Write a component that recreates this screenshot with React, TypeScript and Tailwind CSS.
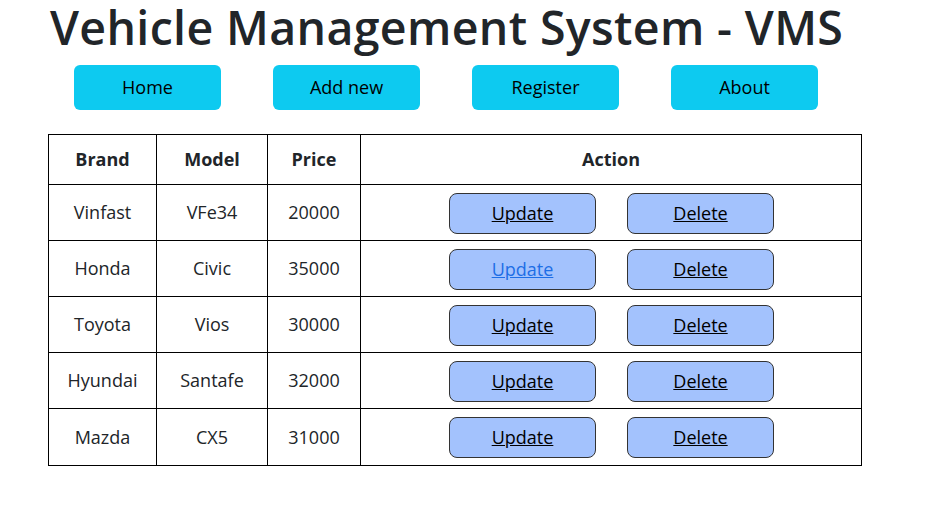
const vehicles = [
  { brand: "Vinfast", model: "VFe34", price: 20000 },
  { brand: "Honda", model: "Civic", price: 35000 },
  { brand: "Toyota", model: "Vios", price: 30000 },
  { brand: "Hyundai", model: "Santafe", price: 32000 },
  { brand: "Mazda", model: "CX5", price: 31000 },
];

const navItems = ["Home", "Add new", "Register", "About"];

export default function App() {
  return (
    <div className="min-h-screen bg-white text-[#212529] font-['Open_Sans','Noto_Sans',sans-serif]">
      <div className="pl-[48px] w-[862px]">
        <h1 className="ml-[2px] text-[46.5px] leading-[54px] font-semibold tracking-[0.35px] whitespace-nowrap">
          Vehicle Management System - VMS
        </h1>

        <nav className="flex gap-[52px] ml-[26px] mt-[11px]">
          {navItems.map((item) => (
            <button
              key={item}
              className="w-[147px] h-[45px] rounded-md bg-[#0dcaf0] text-[18px] text-black"
            >
              {item}
            </button>
          ))}
        </nav>

        <table className="mt-[24px] w-[814px] border-collapse text-[18px] text-center">
          <thead>
            <tr className="h-[50px]">
              <th className="border border-black w-[108px] font-bold">Brand</th>
              <th className="border border-black w-[111px] font-bold">Model</th>
              <th className="border border-black w-[93px] font-bold">Price</th>
              <th className="border border-black font-bold">Action</th>
            </tr>
          </thead>
          <tbody>
            {vehicles.map((v, i) => (
              <tr key={v.brand} className={i === 4 ? "h-[57px]" : "h-[56px]"}>
                <td className="border border-black">{v.brand}</td>
                <td className="border border-black">{v.model}</td>
                <td className="border border-black">{v.price}</td>
                <td className="border border-black">
                  <div className="flex justify-center gap-[31px] pl-[1px] pt-[1px]">
                    <button
                      className={`w-[147px] h-[41px] rounded-lg border border-[#333] bg-[#a3c2fd] underline ${
                        i === 1 ? "text-[#1d6ee6]" : "text-black"
                      }`}
                    >
                      Update
                    </button>
                    <button className="w-[147px] h-[41px] rounded-lg border border-[#333] bg-[#a3c2fd] underline text-black">
                      Delete
                    </button>
                  </div>
                </td>
              </tr>
            ))}
          </tbody>
        </table>
      </div>
    </div>
  );
}
